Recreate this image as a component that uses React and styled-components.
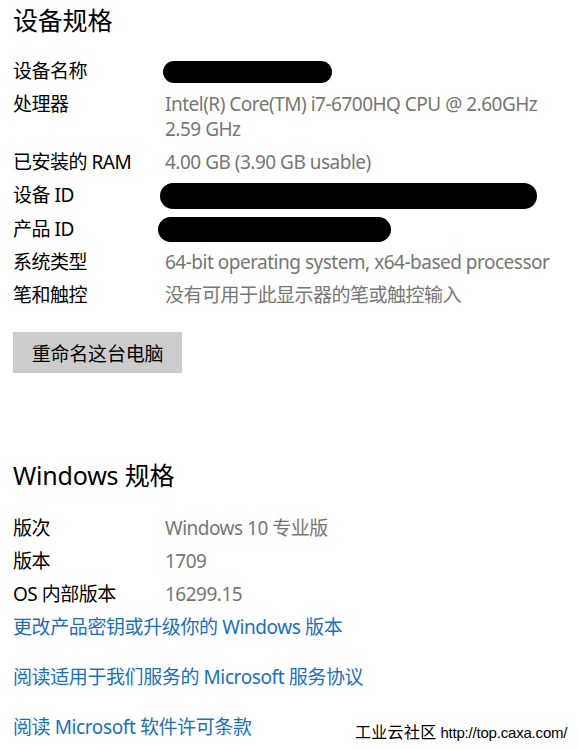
import React from 'react';
import styled, { createGlobalStyle } from 'styled-components';

const GlobalStyle = createGlobalStyle`
  html, body {
    margin: 0;
    padding: 0;
    background: #fff;
  }
  body {
    font-family: "Noto Sans", "Noto Sans CJK SC", sans-serif;
  }
`;

const deviceSpecs = [
  { label: '设备名称', blob: { width: 169, height: 22, shift: -2 } },
  { label: '处理器', value: ['Intel(R) Core(TM) i7-6700HQ CPU @ 2.60GHz', '2.59 GHz'] },
  { label: '已安装的 RAM', value: ['4.00 GB (3.90 GB usable)'] },
  { label: '设备 ID', blob: { width: 377, height: 26, shift: -5 } },
  { label: '产品 ID', blob: { width: 233, height: 25, shift: -7 } },
  { label: '系统类型', value: ['64-bit operating system, x64-based processor'] },
  { label: '笔和触控', value: ['没有可用于此显示器的笔或触控输入'] },
];

const windowsSpecs = [
  { label: '版次', value: ['Windows 10 专业版'] },
  { label: '版本', value: ['1709'] },
  { label: 'OS 内部版本', value: ['16299.15'] },
];

const links = [
  '更改产品密钥或升级你的 Windows 版本',
  '阅读适用于我们服务的 Microsoft 服务协议',
  '阅读 Microsoft 软件许可条款',
];

const SpecList = ({ items }) => (
  <Specs>
    {items.map((item) => (
      <SpecRow key={item.label}>
        <Label>{item.label}</Label>
        <Value>
          {item.blob ? (
            <Redacted $w={item.blob.width} $h={item.blob.height} $shift={item.blob.shift} />
          ) : (
            item.value.map((line) => <Line key={line}>{line}</Line>)
          )}
        </Value>
      </SpecRow>
    ))}
  </Specs>
);

export default function App() {
  return (
    <Page>
      <GlobalStyle />
      <Heading>设备规格</Heading>
      <SpecList items={deviceSpecs} />
      <RenameButton>重命名这台电脑</RenameButton>

      <Heading $gap={82} $after={17}>Windows 规格</Heading>
      <SpecList items={windowsSpecs} />
      <Links>
        {links.map((text) => (
          <LinkItem key={text} href="#">{text}</LinkItem>
        ))}
      </Links>

      <Watermark>工业云社区 <span>http://top.caxa.com/</span></Watermark>
    </Page>
  );
}

const Page = styled.div`
  position: relative;
  width: 578px;
  height: 749px;
  box-sizing: border-box;
  padding: 0 0 0 13px;
  overflow: hidden;
  color: #000;
`;

const Heading = styled.h1`
  margin: ${(p) => p.$gap || 0}px 0 ${(p) => p.$after || 15}px 0;
  font-size: 25px;
  font-weight: 400;
  line-height: 40px;
  letter-spacing: -0.2px;
`;

const Specs = styled.div`
  display: flex;
  flex-direction: column;
`;

const SpecRow = styled.div`
  display: grid;
  grid-template-columns: 152px 1fr;
  padding: 4px 0;
  font-size: 19px;
  line-height: 25px;
  letter-spacing: -0.5px;
`;

const Label = styled.div`
  color: #000;
`;

const Value = styled.div`
  color: #767676;
  display: flex;
  flex-direction: column;
  align-items: flex-start;
  justify-content: center;
`;

const Line = styled.span`
  white-space: nowrap;
`;

const Redacted = styled.span`
  display: inline-block;
  width: ${(p) => p.$w}px;
  height: ${(p) => p.$h}px;
  margin-left: ${(p) => p.$shift}px;
  background: #000;
  border-radius: ${(p) => p.$h / 2}px;
`;

const RenameButton = styled.button`
  margin-top: 20px;
  width: 169px;
  height: 41px;
  border: none;
  background: #cccccc;
  color: #000;
  font-family: inherit;
  font-size: 19px;
  letter-spacing: -0.2px;
  padding: 0;
  text-align: center;
`;

const Links = styled.div`
  display: flex;
  flex-direction: column;
  gap: 25px;
  margin-top: 4px;
`;

const LinkItem = styled.a`
  font-size: 19px;
  line-height: 25px;
  letter-spacing: -0.4px;
  color: #1a6fc0;
  text-decoration: none;
  white-space: nowrap;
`;

const Watermark = styled.div`
  position: absolute;
  left: 355px;
  top: 720px;
  font-family: "Noto Sans CJK SC", sans-serif;
  font-size: 16px;
  line-height: 22px;
  letter-spacing: 0.3px;
  color: #000;

  span {
    font-family: "Liberation Sans", sans-serif;
    letter-spacing: -0.2px;
    font-size: 15px;
  }
`;
